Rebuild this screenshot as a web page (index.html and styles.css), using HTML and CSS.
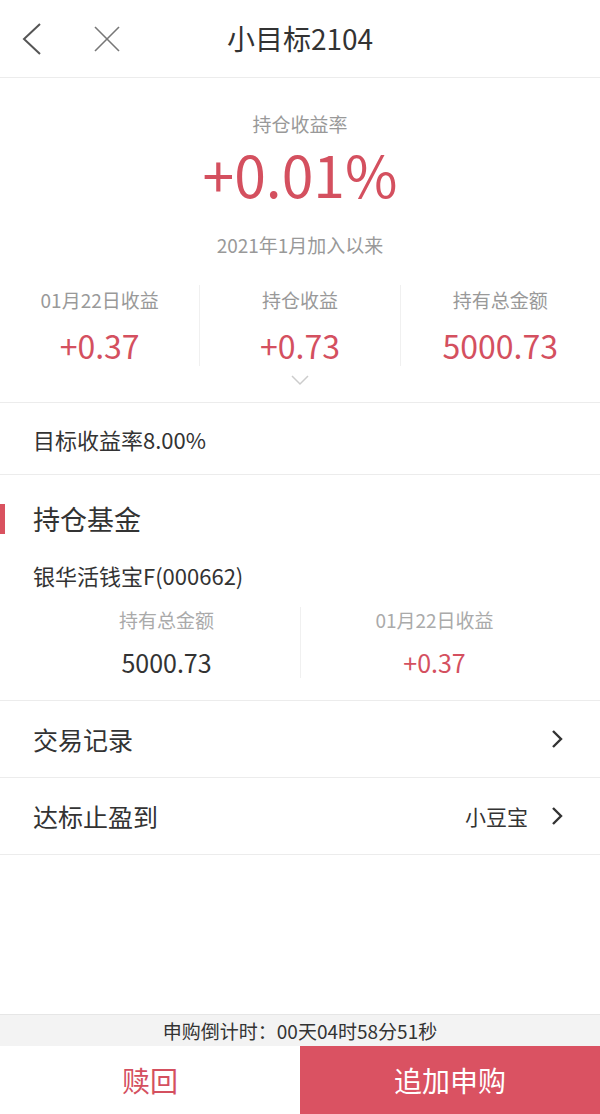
FILE: index.html
```html
<!doctype html>
<html lang="zh-CN">
  <head>
    <meta charset="utf-8" />
    <meta name="viewport" content="width=device-width, initial-scale=1" />
    <title>小目标2104</title>
    <link rel="stylesheet" href="styles.css">
  </head>

  <body>
    <header class="topbar">
      <div class="topbar-icons">
        <svg class="icon-back" width="24" height="36" viewBox="0 0 24 36">
          <polyline points="20,3 4,18 20,33" fill="none" stroke="#555" stroke-width="2" />
        </svg>
        <svg class="icon-close" width="30" height="30" viewBox="0 0 30 30">
          <line x1="3" y1="3" x2="27" y2="27" stroke="#777" stroke-width="1.6" />
          <line x1="27" y1="3" x2="3" y2="27" stroke="#777" stroke-width="1.6" />
        </svg>
      </div>
      <h1 class="title">小目标2104</h1>
    </header>

    <section class="summary">
      <p class="summary-label">持仓收益率</p>
      <p class="summary-rate">+0.01%</p>
      <p class="summary-since">2021年1月加入以来</p>

      <div class="stats">
        <div class="stat">
          <span class="stat-label">01月22日收益</span>
          <span class="stat-value">+0.37</span>
        </div>
        <div class="stat">
          <span class="stat-label">持仓收益</span>
          <span class="stat-value">+0.73</span>
        </div>
        <div class="stat">
          <span class="stat-label">持有总金额</span>
          <span class="stat-value">5000.73</span>
        </div>
      </div>

      <svg class="expand" width="20" height="12" viewBox="0 0 20 12">
        <polyline points="2,2 10,10 18,2" fill="none" stroke="#ccc" stroke-width="1.5" />
      </svg>
    </section>

    <div class="target">目标收益率8.00%</div>

    <section class="fund">
      <h2 class="fund-title">持仓基金</h2>
      <p class="fund-name">银华活钱宝F(000662)</p>
      <div class="fund-stats">
        <div class="fund-stat">
          <span class="fund-label">持有总金额</span>
          <span class="fund-value">5000.73</span>
        </div>
        <div class="fund-stat">
          <span class="fund-label">01月22日收益</span>
          <span class="fund-value red">+0.37</span>
        </div>
      </div>
    </section>

    <div class="row">
      <span class="row-text">交易记录</span>
      <svg class="chev" width="14" height="22" viewBox="0 0 14 22">
        <polyline points="3,3 11,11 3,19" fill="none" stroke="#333" stroke-width="2.4" />
      </svg>
    </div>
    <div class="row">
      <span class="row-text">达标止盈到</span>
      <span class="row-extra">小豆宝</span>
      <svg class="chev" width="14" height="22" viewBox="0 0 14 22">
        <polyline points="3,3 11,11 3,19" fill="none" stroke="#333" stroke-width="2.4" />
      </svg>
    </div>

    <footer class="bottom">
      <div class="countdown">申购倒计时：00天04时58分51秒</div>
      <div class="actions">
        <button class="btn-redeem" type="button">赎回</button>
        <button class="btn-buy" type="button">追加申购</button>
      </div>
    </footer>
  </body>
</html>
```

FILE: styles.css
```css
body {
  margin: 0;
  font-family: "Noto Sans CJK SC", "Noto Sans", sans-serif;
  background-color: #fff;
  color: #333;
  display: flex;
  flex-direction: column;
  min-height: 100vh;
}

p,
h1,
h2 {
  margin: 0;
  font-weight: normal;
}

.topbar {
  height: 77px;
  border-bottom: 1px solid #ececec;
  display: flex;
  align-items: center;
  justify-content: center;
  position: relative;
}

.topbar-icons {
  position: absolute;
  left: 20px;
  top: 21px;
  display: flex;
  align-items: center;
  gap: 48px;
}

.title {
  font-size: 28px;
  color: #333;
  line-height: 1;
  margin-top: -2px;
}

.summary {
  display: flex;
  flex-direction: column;
  align-items: center;
  padding-top: 32px;
  border-bottom: 1px solid #ececec;
}

.summary-label {
  font-size: 19px;
  color: #999;
  line-height: 28px;
}

.summary-rate {
  font-size: 57px;
  color: #d4505f;
  line-height: 70px;
}

.summary-since {
  font-size: 19px;
  color: #999;
  line-height: 28px;
  margin-top: 23px;
}

.stats {
  display: flex;
  width: 100%;
  margin-top: 26px;
}

.stat {
  flex: 1;
  display: flex;
  flex-direction: column;
  align-items: center;
  gap: 13px;
  padding: 2px 0;
}

.stat + .stat {
  border-left: 1px solid #f0f0f0;
}

.stat-label {
  font-size: 19px;
  color: #999;
  line-height: 26px;
}

.stat-value {
  font-size: 32px;
  color: #d4505f;
  line-height: 38px;
}

.expand {
  margin: 8px 0 16px;
}

.target {
  height: 71px;
  display: flex;
  align-items: center;
  padding-left: 33px;
  font-size: 22px;
  color: #333;
  border-bottom: 1px solid #ececec;
}

.fund {
  padding-top: 29px;
  border-bottom: 1px solid #ececec;
}

.fund-title {
  font-size: 27px;
  line-height: 30px;
  padding-left: 28px;
  border-left: 5px solid #d9525f;
}

.fund-name {
  font-size: 22px;
  line-height: 30px;
  padding-left: 33px;
  margin-top: 26px;
}

.fund-stats {
  display: flex;
  margin-top: 17px;
  padding: 0 32px 22px 33px;
}

.fund-stat {
  flex: 1;
  display: flex;
  flex-direction: column;
  align-items: center;
  gap: 13px;
}

.fund-stat + .fund-stat {
  border-left: 1px solid #f0f0f0;
}

.fund-label {
  font-size: 19px;
  color: #aaa;
  line-height: 26px;
}

.fund-value {
  font-size: 25px;
  color: #333;
  line-height: 32px;
}

.fund-value.red {
  color: #d4505f;
}

.row {
  height: 76px;
  display: flex;
  align-items: center;
  padding: 0 36px 0 33px;
  border-bottom: 1px solid #ececec;
}

.row-text {
  font-size: 25px;
  color: #333;
  flex: 1;
}

.row-extra {
  font-size: 21px;
  color: #333;
  margin-right: 22px;
}

.bottom {
  margin-top: auto;
}

.countdown {
  height: 31px;
  background-color: #f3f3f3;
  border-top: 1px solid #e6e6e6;
  font-size: 19px;
  color: #333;
  text-align: center;
  line-height: 31px;
}

.actions {
  display: flex;
  height: 68px;
}

.actions button {
  flex: 1;
  border: none;
  font-family: inherit;
  cursor: pointer;
}

.btn-redeem {
  background-color: #fff;
  color: #d4505f;
  font-size: 28px;
}

.btn-buy {
  background-color: #da5262;
  color: #fff;
  font-size: 28px;
}
```
